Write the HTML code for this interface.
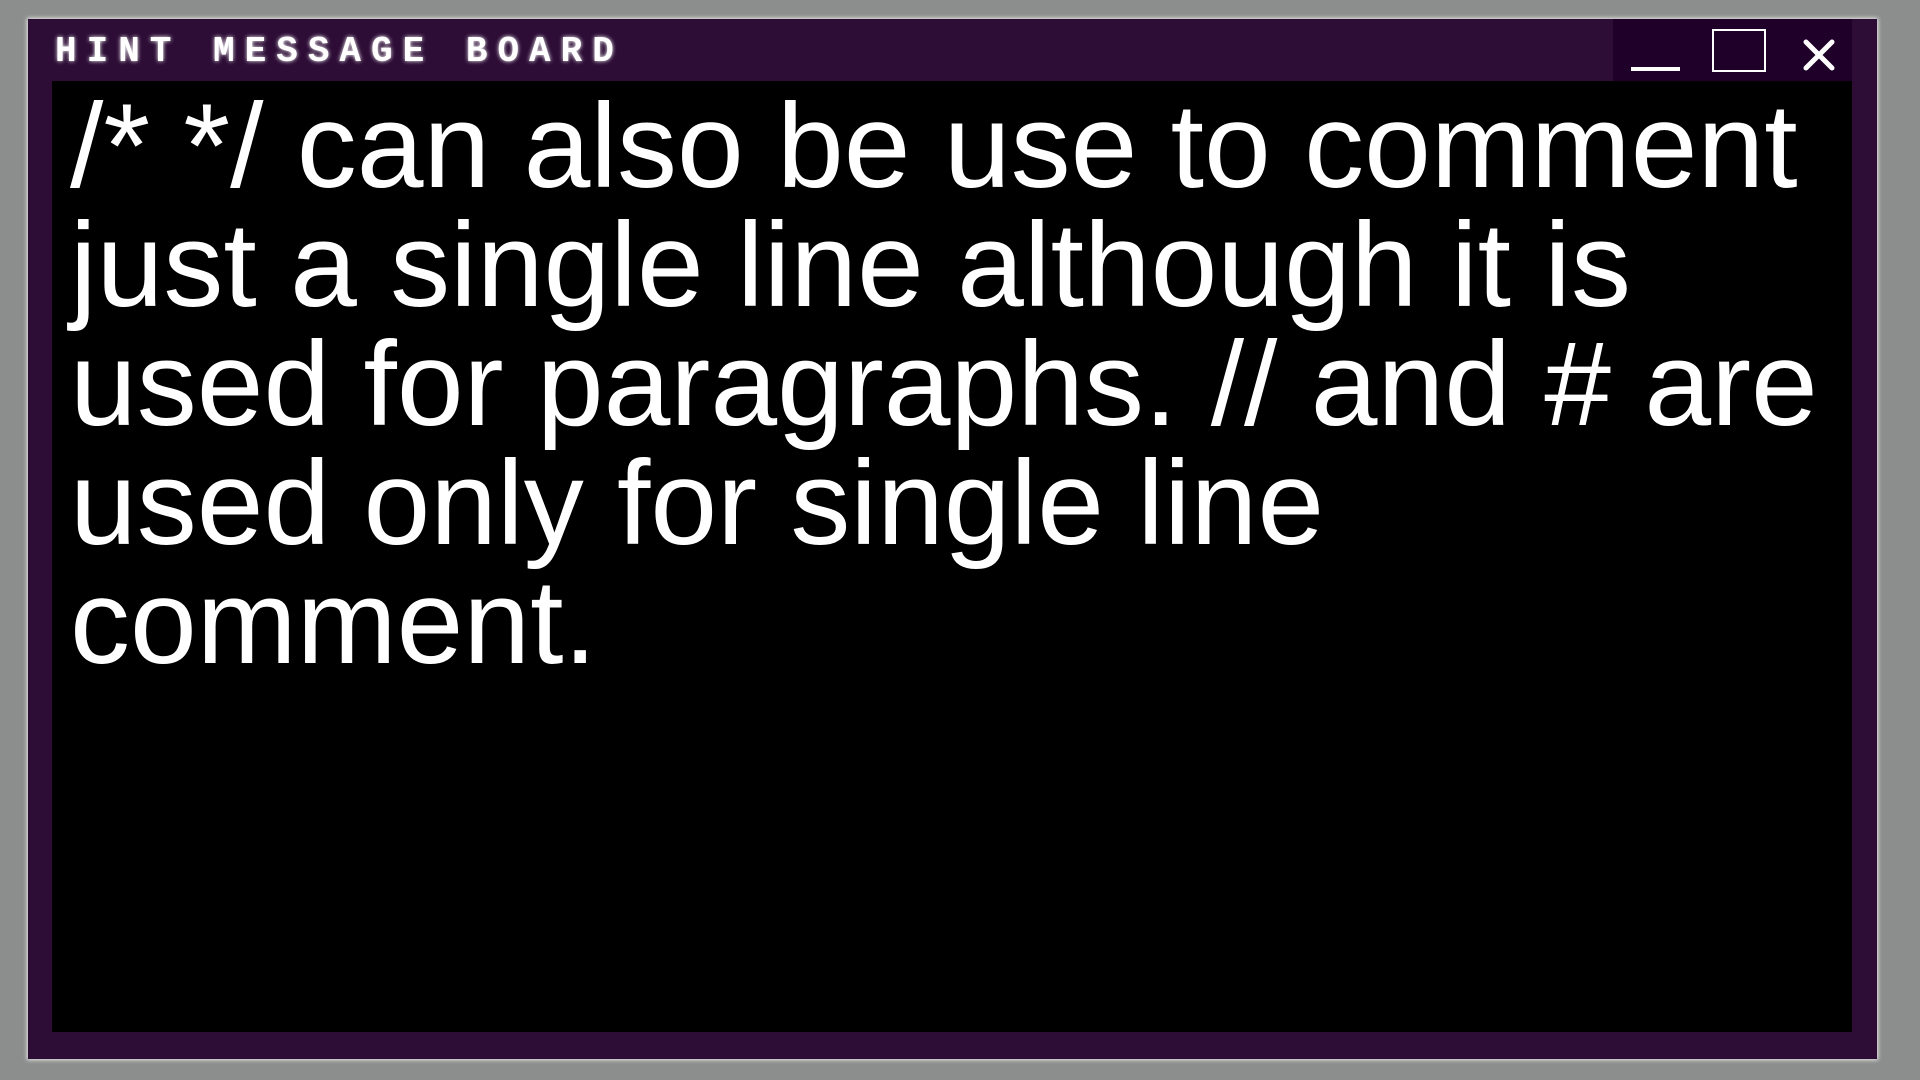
<!DOCTYPE html>
<html><head><style>
html,body{margin:0;padding:0;width:1920px;height:1080px;background:#8c8e8d;overflow:hidden;}
.win{position:absolute;left:28px;top:19px;width:1849px;height:1040px;background:#2d0d36;box-shadow:0 0 4px 1px #e8e8e8;}
.title{position:absolute;left:27px;top:15px;font-family:"Liberation Mono",monospace;font-weight:bold;font-size:36px;letter-spacing:10px;color:#fff;text-shadow:0 0 4px #fff;line-height:36px;white-space:nowrap;}
.ctrl{position:absolute;left:1585px;top:0;width:239px;height:62px;background:#1e0028;}
.min{position:absolute;left:18px;top:48px;width:49px;height:4px;background:#fff;}
.max{position:absolute;left:99px;top:10px;width:50px;height:39px;border:2px solid #fff;}
.body{position:absolute;left:24px;top:62px;width:1800px;height:951px;background:#000;}
.txt{position:absolute;left:18px;top:6px;width:1780px;font-family:"Liberation Sans",sans-serif;font-size:120px;line-height:119px;color:#fff;}
</style></head><body>
<div class="win">
<div class="title">HINT MESSAGE BOARD</div>
<div class="ctrl">
<div class="min"></div>
<div class="max"></div>
<svg style="position:absolute;left:188px;top:18px" width="36" height="36" viewBox="0 0 36 36"><path d="M5 5L31 31M31 5L5 31" stroke="#fff" stroke-width="5" stroke-linecap="round"/></svg>
</div>
<div class="body"><div class="txt">/* */ can also be use to comment just a single line although it is used for paragraphs. // and # are used only for single line comment.</div></div>
</div>
</body></html>
